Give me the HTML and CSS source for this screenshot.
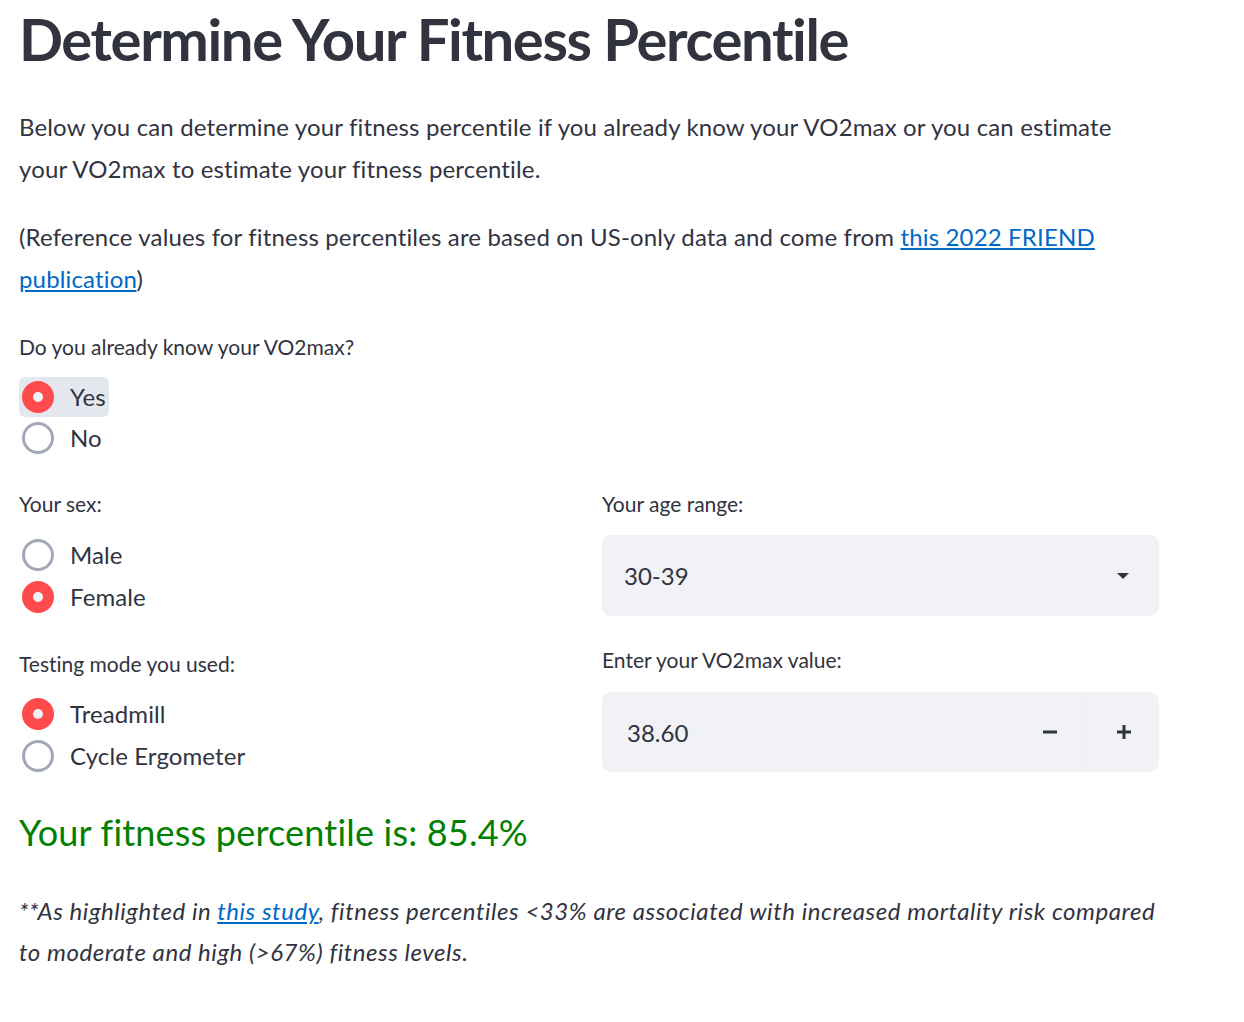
FILE: index.html
```html
<!DOCTYPE html>
<html lang="en">
<head>
<meta charset="utf-8">
<title>Determine Your Fitness Percentile</title>
<link rel="stylesheet" href="styles.css">
</head>
<body>
<main class="page">
  <h1 class="title">Determine Your Fitness Percentile</h1>
  <p class="text">Below you can determine your fitness percentile if you already know your VO2max or you can estimate your VO2max to estimate your fitness percentile.</p>
  <p class="text text-ref">(Reference values for fitness percentiles are based on US-only data and come from <a href="#" class="link">this 2022 FRIEND publication</a>)</p>

  <div class="field field-know">
    <div class="label">Do you already know your VO2max?</div>
    <div class="radios">
      <div class="radio checked focus"><span class="dot"></span><span class="opt">Yes</span></div>
      <div class="radio"><span class="dot"></span><span class="opt">No</span></div>
    </div>
  </div>

  <div class="cols">
    <div class="col">
      <div class="field">
        <div class="label">Your sex:</div>
        <div class="radios">
          <div class="radio"><span class="dot"></span><span class="opt">Male</span></div>
          <div class="radio checked"><span class="dot"></span><span class="opt">Female</span></div>
        </div>
      </div>
      <div class="field field-mode">
        <div class="label">Testing mode you used:</div>
        <div class="radios">
          <div class="radio checked"><span class="dot"></span><span class="opt">Treadmill</span></div>
          <div class="radio"><span class="dot"></span><span class="opt">Cycle Ergometer</span></div>
        </div>
      </div>
    </div>
    <div class="col">
      <div class="field">
        <div class="label">Your age range:</div>
        <div class="select">
          <span class="select-value">30-39</span>
          <svg class="caret" width="14" height="8" viewBox="0 0 14 8"><path d="M1 1 L13 1 L7 7 Z" fill="#31333F"/></svg>
        </div>
      </div>
      <div class="field field-vo2">
        <div class="label">Enter your VO2max value:</div>
        <div class="number">
          <span class="number-value">38.60</span>
          <span class="step step-minus"><svg width="14" height="14" viewBox="0 0 14 14"><rect x="0" y="5.5" width="14" height="3" fill="#31333F"/></svg></span>
          <span class="step step-plus"><svg width="14" height="14" viewBox="0 0 14 14"><rect x="0" y="5.5" width="14" height="3" fill="#31333F"/><rect x="5.5" y="0" width="3" height="14" fill="#31333F"/></svg></span>
        </div>
      </div>
    </div>
  </div>

  <h3 class="result">Your fitness percentile is: 85.4%</h3>
  <p class="note"><em>**As highlighted in <a href="#" class="link">this study</a>, fitness percentiles &lt;33% are associated with increased mortality risk compared to moderate and high (&gt;67%) fitness levels.</em></p>
</main>
</body>
</html>
```
FILE: styles.css
```css
* { box-sizing: border-box; }
html, body { margin: 0; padding: 0; background: #ffffff; }
body {
  font-family: "Lato", "Liberation Sans", sans-serif;
  color: #31333F;
  font-variant-ligatures: none;
  font-feature-settings: "liga" 0;
}
.page {
  width: 1160px;
  padding-left: 19px;
}
.title {
  margin: 0;
  font-size: 58px;
  font-weight: 700;
  line-height: 78px;
  letter-spacing: -1.4px;
}
.text {
  margin: 28px 0 0 0;
  font-size: 24px;
  line-height: 42px;
  letter-spacing: 0.15px;
  width: 1141px;
}
.text-ref { margin-top: 26px; }
.link { color: #0068C9; text-decoration: underline; }
.field-know { margin-top: 32px; }
.label {
  font-size: 21px;
  line-height: 30px;
}
.radios {
  margin-top: 15px;
  display: flex;
  flex-direction: column;
  align-items: flex-start;
  gap: 1px;
}
.radio {
  display: flex;
  align-items: center;
  height: 40px;
  padding: 0 3px 0 3px;
  border-radius: 6px;
}
.radio.focus { background: #E4E7EE; }
.dot {
  width: 32px;
  height: 32px;
  border-radius: 50%;
  border: 3px solid #A3A8B8;
  background: #ffffff;
  flex: none;
}
.radio.checked .dot {
  border: 11px solid #FF4B4B;
  background: #F0F2F6;
}
.opt {
  margin-left: 16px;
  font-size: 24px;
  line-height: 40px;
  letter-spacing: 0.1px;
}
.cols {
  margin-top: 31px;
  display: grid;
  grid-template-columns: 559px 557px;
  column-gap: 24px;
  align-items: start;
}
.col .radios { margin-top: 16px; gap: 2px; }
.field-mode { margin-top: 32px; }
.field-mode .radios { margin-top: 15px; }
.select {
  margin-top: 16px;
  height: 81px;
  background: #F0F2F6;
  border-radius: 9px;
  display: flex;
  align-items: center;
  justify-content: space-between;
  padding: 0 29px 0 22px;
}
.select-value { font-size: 24px; }
.field-vo2 { margin-top: 29px; }
.number {
  margin-top: 17px;
  height: 80px;
  background: #F0F2F6;
  border-radius: 9px;
  display: flex;
  align-items: stretch;
}
.number-value {
  flex: 1;
  display: flex;
  align-items: center;
  padding-left: 25px;
  font-size: 24px;
}
.step {
  width: 74px;
  display: flex;
  align-items: center;
  justify-content: center;
}
.step-plus { border-left: 1px solid #EDEFF3; width: 72px; }
.result {
  margin: 28px 0 0 0;
  font-size: 36px;
  font-weight: 400;
  line-height: 56px;
  letter-spacing: 0.2px;
  color: #008000;
}
.note {
  margin: 30px 0 0 0;
  font-size: 24px;
  line-height: 41px;
  letter-spacing: 0.55px;
  width: 1141px;
}
```
